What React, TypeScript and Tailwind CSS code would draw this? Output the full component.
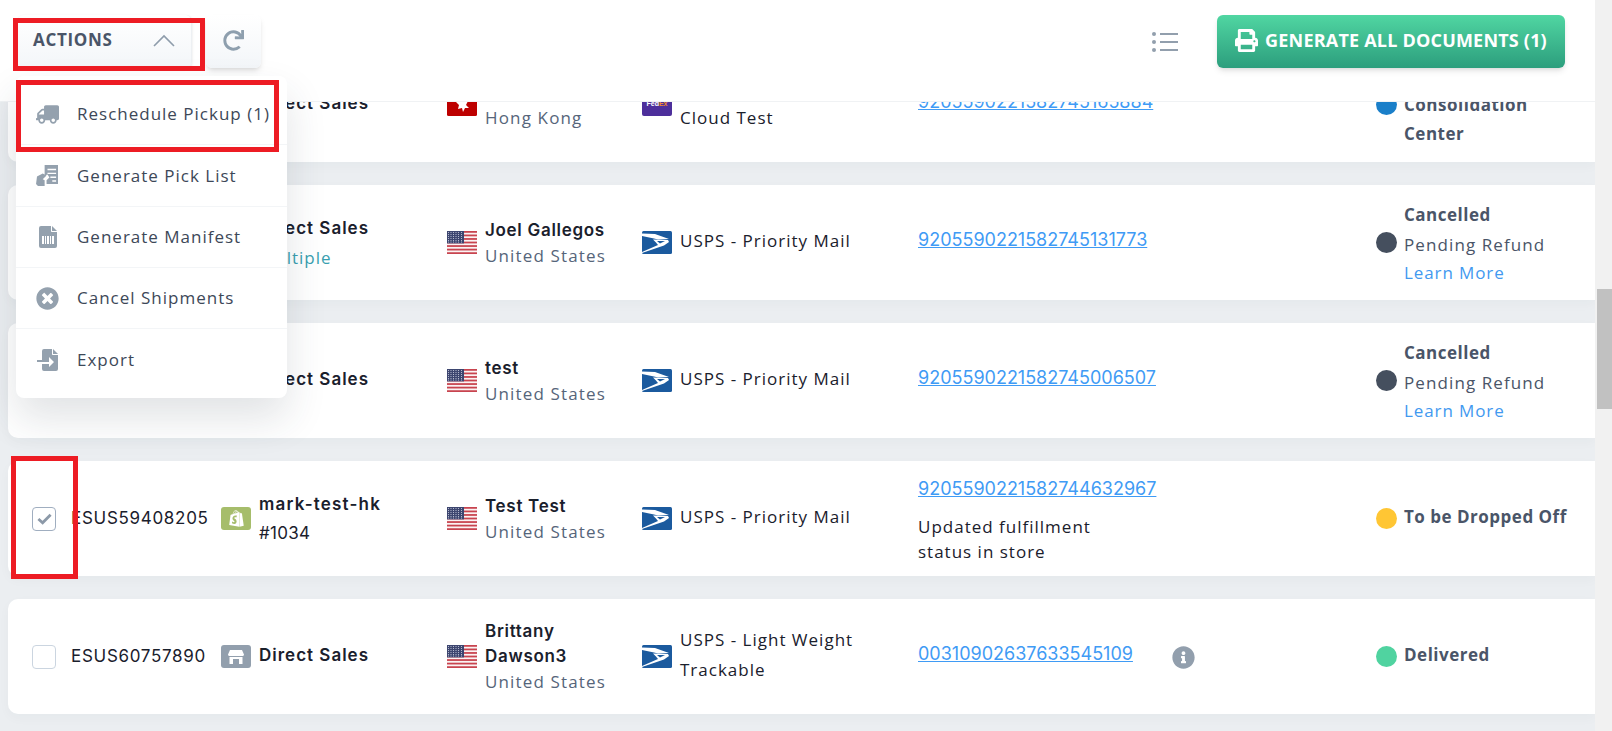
import { ReactNode } from 'react';
import { FaPrint, FaRedo, FaShopify, FaTimesCircle, FaTruck, FaInfoCircle } from 'react-icons/fa';

function UsFlag() {
  const stripes = [0, 2, 4, 6, 8, 10, 12];
  return (
    <svg viewBox="0 0 30 23" className="h-[23px] w-[30px] shrink-0">
      <rect width="30" height="23" rx="1.5" fill="#fbf3f3" />
      {stripes.map((i) => (
        <rect key={i} y={i * 1.77} width="30" height="1.77" fill="#c8444f" />
      ))}
      <rect width="17" height="12.4" fill="#3d4670" />
      {[1.5, 3.5, 5.5, 7.5, 9.5, 11].map((y) =>
        [1.5, 4, 6.5, 9, 11.5, 14.5].map((x) => (
          <circle key={`${x}-${y}`} cx={x} cy={y} r="0.55" fill="#c9cede" />
        ))
      )}
    </svg>
  );
}

function HkFlag() {
  return (
    <svg viewBox="0 0 30 23" className="h-[23px] w-[30px] shrink-0">
      <rect width="30" height="23" rx="1.5" fill="#bd0000" />
      <path d="M15 5l2 4 4-1-2 4 3 3-4 0-2 4-1-4-4 1 1-4-3-3 4 0z" fill="#fff" />
    </svg>
  );
}

function UspsLogo() {
  return (
    <svg viewBox="0 0 30 23" className="h-[23px] w-[30px] shrink-0">
      <rect width="30" height="23" rx="1.5" fill="#1b5a9e" />
      <path d="M0 2.5 L13 3 L27 8 L16 8.5 L12 7.5 L0 5z" fill="#fff" />
      <path d="M11 8.5 L26 9 L27 11 L22 14.5 L0 22 L0 21 L16 14 L14 11.5z" fill="#fff" />
      <path d="M15 10 L23 10 L18 12.5z" fill="#1b5a9e" />
    </svg>
  );
}

function FedexLogo() {
  return (
    <div className="flex h-[23px] w-[30px] shrink-0 items-start justify-center overflow-hidden rounded-[2px] bg-[#4d2f9b] pt-[7px] font-['Liberation_Sans',sans-serif] text-[7px] font-bold leading-[8px] text-white">
      Fed<span className="text-[#f08a2c]">Ex</span>
    </div>
  );
}

function StoreIcon() {
  return (
    <div className="flex h-[23px] w-[30px] shrink-0 items-center justify-center rounded-[3px] bg-[#929fad]">
      <svg viewBox="0 0 16 14" className="h-[14px] w-[16px]" fill="#fff">
        <path d="M2 0h12l2 4.5c0 1-1 1.5-2 1.5H2C1 6 0 5.500 0 4.500z" />
        <path d="M1.500 7H14.500V14H11V9H5V14H1.500z" />
      </svg>
    </div>
  );
}

function ShopifyIcon() {
  return (
    <div className="flex h-[23px] w-[30px] shrink-0 items-center justify-center rounded-[3px] bg-[#a6bd6b]">
      <FaShopify className="h-[17px] w-[17px] text-white" />
    </div>
  );
}

function PickListIcon() {
  return (
    <svg viewBox="0 0 24 22" className="h-[21px] w-[23px]" fill="#94a1ae">
      <path d="M9 0h14v20H11v-4l3-3-2-3-3 1z" />
      <path d="M1 12l6-3 4 2-4 4 2 1 0 6H2l-2-2z" />
      <path d="M12 4h9v1.500h-9zM12 8h9v1.500h-9zM15 12h6v1.500h-6zM17 16h4v1.500h-4z" fill="#fff" />
    </svg>
  );
}

function ManifestIcon() {
  return (
    <svg viewBox="0 0 18 22" className="h-[22px] w-[18px]" fill="#94a1ae">
      <path d="M2 0h10v5c0 .6.4 1 1 1h5v14a2 2 0 0 1-2 2H2a2 2 0 0 1-2-2V2a2 2 0 0 1 2-2z" />
      <path d="M13 0l5 5h-5z" />
      <path d="M3 10h2v8H3zM6 10h1v8H6zM8 10h2v8H8zM11 10h1v8h-1zM13 10h2v8h-2z" fill="#fff" />
    </svg>
  );
}

function ExportIcon() {
  return (
    <svg viewBox="0 0 22 22" className="h-[22px] w-[22px]" fill="#94a1ae">
      <path d="M5 2a2 2 0 0 1 2-2h8v5c0 .6.4 1 1 1h5v14a2 2 0 0 1-2 2H7a2 2 0 0 1-2-2v-5h7v3l5-5-5-5v3H5z" />
      <path d="M16 0l5 5h-5z" />
      <path d="M0 11h12v2H0z" />
    </svg>
  );
}

function MenuItem({ icon, label, last }: { icon: ReactNode; label: string; last?: boolean }) {
  return (
    <div className={`flex h-[61.300px] items-center ${last ? '' : 'border-b border-[#f3f5f7]'}`}>
      <div className="flex w-[61px] shrink-0 justify-center pl-[2px]">{icon}</div>
      <span className="text-[17px] tracking-[1px] text-[#3d4858]">{label}</span>
    </div>
  );
}

function StatusDot({ color }: { color: string }) {
  return <span className={`h-[21px] w-[21px] shrink-0 rounded-full ${color}`} />;
}

function Pending() {
  return (
    <div className="text-[17px] text-[#4a5568]">
      <div className="font-bold leading-[29px] tracking-[0.5px]">Cancelled</div>
      <div className="leading-[31px] tracking-[1.1px]">Pending Refund</div>
      <div className="leading-[25px] tracking-[0.9px] text-[#4299f0]">Learn More</div>
    </div>
  );
}

type Row = {
  box: ReactNode;
  id?: string;
  storeIcon?: ReactNode;
  store: ReactNode;
  flag: ReactNode;
  consignee: ReactNode;
  logo: ReactNode;
  carrier: ReactNode;
  tracking: ReactNode;
  dot: string;
  status: ReactNode;
};

function Name({ children }: { children: ReactNode }) {
  return <div className="font-['Inter',sans-serif] text-[17px] font-semibold leading-[25px] tracking-[0.7px] text-[#1a202c]">{children}</div>;
}

function Country({ children }: { children: ReactNode }) {
  return <div className="text-[17px] leading-[25px] tracking-[1.15px] text-[#56657a]">{children}</div>;
}

function Direct() {
  return <div className="pb-[1px] font-['Inter',sans-serif] text-[17px] font-semibold tracking-[1px] text-[#1a202c]">Direct Sales</div>;
}

function Track({ code }: { code: string }) {
  return <span className="font-['Inter',sans-serif] text-[18px] leading-[30px] text-[#3f9bf5] underline">{code}</span>;
}

const emptyBox = <div className="h-6 w-6 rounded border border-[#cbd5e0]" />;

const rows: Row[] = [
  {
    box: emptyBox,
    store: <Direct />,
    flag: <HkFlag />,
    consignee: (
      <>
        <div className="h-[25px]" />
        <Country>Hong Kong</Country>
      </>
    ),
    logo: <FedexLogo />,
    carrier: (
      <>
        <div className="h-[30px]" />
        <div>Cloud Test</div>
      </>
    ),
    tracking: (
      <div className="pb-[5px]">
        <Track code="9205590221582745165884" />
      </div>
    ),
    dot: 'bg-[#1a7fc9]',
    status: (
      <div className="text-[17px] font-bold leading-[29px] tracking-[0.5px] text-[#4a5568]">
        <div className="h-[29px]" />
        <div>Consolidation</div>
        <div>Center</div>
      </div>
    ),
  },
  {
    box: emptyBox,
    store: (
      <div>
        <div className="font-['Inter',sans-serif] text-[17px] font-semibold leading-[29px] tracking-[1px] text-[#1a202c]">Direct Sales</div>
        <div className="text-[17px] leading-[29px] tracking-[1px] text-[#3a9fb0]">Multiple</div>
      </div>
    ),
    flag: <UsFlag />,
    consignee: (
      <>
        <Name>Joel Gallegos</Name>
        <Country>United States</Country>
      </>
    ),
    logo: <UspsLogo />,
    carrier: 'USPS - Priority Mail',
    tracking: (
      <div className="pb-[5px]">
        <Track code="9205590221582745131773" />
      </div>
    ),
    dot: 'bg-[#454f5e]',
    status: <Pending />,
  },
  {
    box: emptyBox,
    store: <Direct />,
    flag: <UsFlag />,
    consignee: (
      <>
        <Name>test</Name>
        <Country>United States</Country>
      </>
    ),
    logo: <UspsLogo />,
    carrier: 'USPS - Priority Mail',
    tracking: (
      <div className="pb-[5px]">
        <Track code="9205590221582745006507" />
      </div>
    ),
    dot: 'bg-[#454f5e]',
    status: <Pending />,
  },
  {
    box: (
      <div className="flex h-6 w-6 items-center justify-center rounded border border-[#a0aec0]">
        <svg viewBox="0 0 16 12" className="h-[12px] w-[15px]" fill="none" stroke="#8c99a8" strokeWidth="3">
          <path d="M1.500 6 L6 10 L14.500 1.500" />
        </svg>
      </div>
    ),
    id: 'ESUS59408205',
    storeIcon: <ShopifyIcon />,
    store: (
      <>
        <div className="font-['Inter',sans-serif] text-[17px] font-semibold leading-[29px] tracking-[1.2px] text-[#1a202c]">mark-test-hk</div>
        <div className="font-['Inter',sans-serif] text-[17px] leading-[29px] tracking-[0.3px] text-[#1a202c]">#1034</div>
      </>
    ),
    flag: <UsFlag />,
    consignee: (
      <>
        <Name>Test Test</Name>
        <Country>United States</Country>
      </>
    ),
    logo: <UspsLogo />,
    carrier: 'USPS - Priority Mail',
    tracking: (
      <>
        <div>
          <Track code="9205590221582744632967" />
        </div>
        <div className="mt-[10px] text-[17px] leading-[25px] tracking-[1px] text-[#1a202c]">
          Updated fulfillment
          <br />
          status in store
        </div>
      </>
    ),
    dot: 'bg-[#ffc634]',
    status: <div className="pb-[3px] text-[17px] font-bold tracking-[0.5px] text-[#4a5568]">To be Dropped Off</div>,
  },
  {
    box: emptyBox,
    id: 'ESUS60757890',
    storeIcon: <StoreIcon />,
    store: <Direct />,
    flag: <UsFlag />,
    consignee: (
      <>
        <Name>Brittany</Name>
        <Name>Dawson3</Name>
        <Country>United States</Country>
      </>
    ),
    logo: <UspsLogo />,
    carrier: (
      <>
        USPS - Light Weight
        <br />
        Trackable
      </>
    ),
    tracking: (
      <div className="flex items-center pb-[5px]">
        <Track code="00310902637633545109" />
        <FaInfoCircle className="ml-[39px] mt-[6px] h-[23px] w-[23px] text-[#929fad]" />
      </div>
    ),
    dot: 'bg-[#50d3a0]',
    status: <div className="pb-[3px] text-[17px] font-bold tracking-[0.5px] text-[#4a5568]">Delivered</div>,
  },
];

export default function App() {
  return (
    <div className="flex h-[731px] w-[1612px] overflow-hidden bg-[#ebeef1] font-['Open_Sans',sans-serif] text-[#1a202c]">
      <div className="relative w-[1595px] shrink-0 overflow-hidden">
        {/* Top bar */}
        <div className="relative z-10 flex h-[102px] items-start justify-between border-b border-[#f0f2f4] bg-white pl-[18px] pr-[30px] pt-[15px]">
          <div className="flex gap-[14px]">
            <div className="flex h-[53px] w-[174px] items-center justify-between rounded-md border-r border-[#edf0f3] bg-gradient-to-b from-white to-[#f3f6f9] pb-[3px] pl-[15px] pr-[16px] shadow-sm">
              <span className="text-[17px] font-bold tracking-[0.7px] text-[#4a5568]">ACTIONS</span>
              <svg viewBox="0 0 22 13" className="h-[13px] w-[22px]" fill="none" stroke="#8e9cab" strokeWidth="1.600">
                <path d="M1 12 L11 2 L21 12" />
              </svg>
            </div>
            <div className="flex h-[53px] w-[55px] items-center justify-center rounded-md bg-gradient-to-b from-white to-[#f3f6f9] pb-[2px] shadow-md">
              <FaRedo className="h-[21px] w-[21px] text-[#8e9fae]" />
            </div>
          </div>
          <div className="flex items-center gap-[39px]">
            <svg viewBox="0 0 26 20" className="h-[20px] w-[26px]" fill="#929fad">
              <circle cx="2" cy="2" r="2" />
              <circle cx="2" cy="10" r="2" />
              <circle cx="2" cy="18" r="2" />
              <path d="M8 1h18v2H8zM8 9h18v2H8zM8 17h18v2H8z" />
            </svg>
            <div className="flex h-[53px] w-[348px] items-center justify-center gap-[7px] rounded-md bg-gradient-to-b from-[#50d6a2] to-[#2c9e7d] pb-[3px] shadow-md">
              <FaPrint className="h-[23px] w-[23px] text-white" />
              <span className="text-[18px] font-bold tracking-[0.2px] text-white">GENERATE ALL DOCUMENTS (1)</span>
            </div>
          </div>
        </div>

        {/* Shipment rows */}
        <div className="-mt-[55px] flex flex-col gap-[23px] pl-2">
          {rows.map((row, i) => (
            <div key={i} className="flex h-[115px] items-center rounded-l-[10px] bg-white pl-6 shadow-[0_4px_12px_rgba(45,55,72,0.03)]">
              <div className="w-[39px] shrink-0">{row.box}</div>
              <div className="w-[150px] shrink-0 font-['Inter',sans-serif] text-[17px] tracking-[0.7px] text-[#1a202c]">{row.id}</div>
              <div className="flex w-[226px] shrink-0 items-center gap-2">
                {row.storeIcon ?? <div className="h-[23px] w-[30px]" />}
                <div>{row.store}</div>
              </div>
              <div className="flex w-[195px] shrink-0 items-center gap-2">
                {row.flag}
                <div>{row.consignee}</div>
              </div>
              <div className="flex w-[276px] shrink-0 items-center gap-2">
                {row.logo}
                <div className="pb-[3px] text-[17px] leading-[30px] tracking-[1px]">{row.carrier}</div>
              </div>
              <div className="w-[458px] shrink-0">{row.tracking}</div>
              <div className="flex items-center gap-[7px]">
                <StatusDot color={row.dot} />
                {row.status}
              </div>
            </div>
          ))}
        </div>

        {/* Actions dropdown */}
        <div className="absolute left-4 top-[76px] z-20 w-[271px] rounded-lg bg-white pb-[8px] pt-[8px] shadow-[0_20px_40px_rgba(45,55,72,0.14)]">
          <MenuItem icon={<FaTruck className="h-[19px] w-[23px] -scale-x-100 text-[#94a1ae]" />} label="Reschedule Pickup (1)" />
          <MenuItem icon={<PickListIcon />} label="Generate Pick List" />
          <MenuItem icon={<ManifestIcon />} label="Generate Manifest" />
          <MenuItem icon={<FaTimesCircle className="h-[23px] w-[23px] text-[#94a1ae]" />} label="Cancel Shipments" />
          <MenuItem icon={<ExportIcon />} label="Export" last />
        </div>

        {/* Red annotation boxes */}
        <div className="absolute left-[13px] top-[18px] z-30 h-[53px] w-[192px] border-[5px] border-[#ed1c24]" />
        <div className="absolute left-4 top-[80px] z-30 h-[72px] w-[263px] border-[5px] border-[#ed1c24]" />
        <div className="absolute left-[11px] top-[456px] z-30 h-[123px] w-[67px] border-[5px] border-[#ed1c24]" />
      </div>

      {/* Scrollbar */}
      <div className="w-[17px] shrink-0 bg-[#f1f1f1] pl-[2px] pt-[289px]">
        <div className="h-[120px] w-[15px] bg-[#c1c1c1]" />
      </div>
    </div>
  );
}
